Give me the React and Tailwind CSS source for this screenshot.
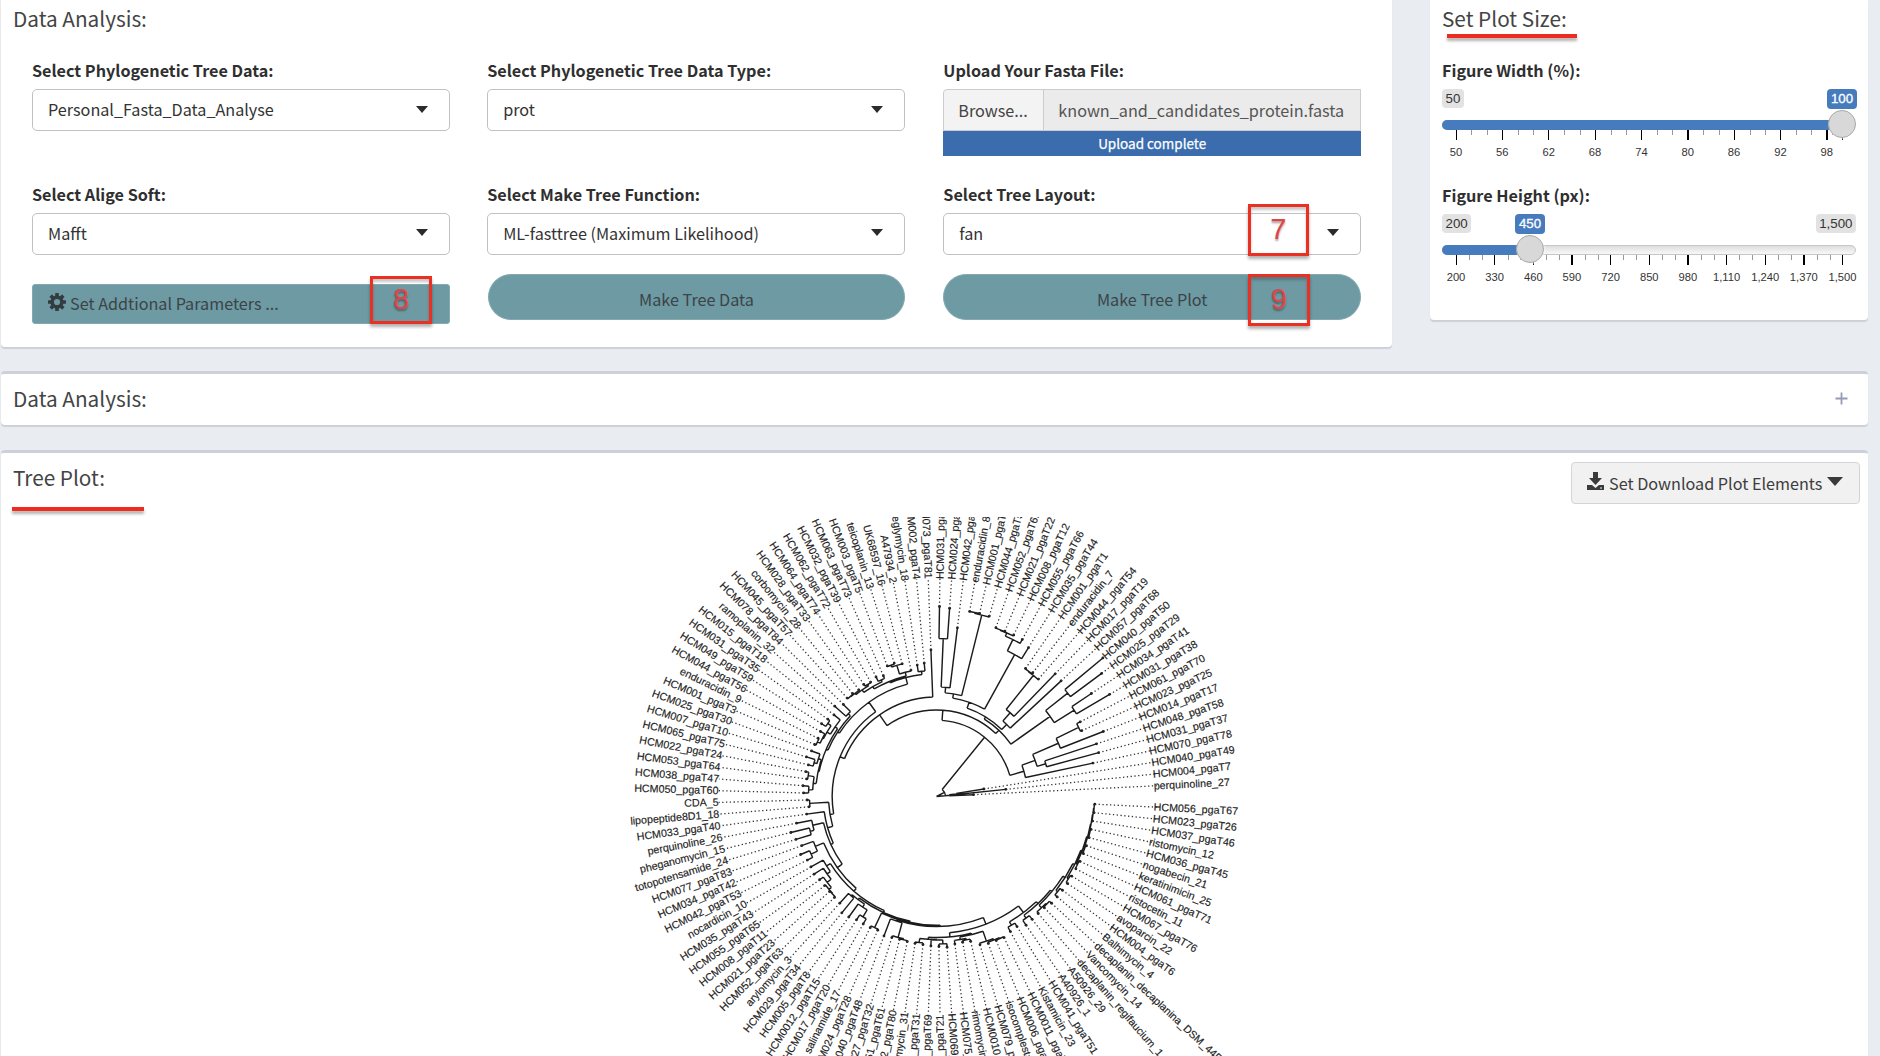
import React from "react";

/* ---------- phylogenetic tree ---------- */

const LABELS = [
  "perquinoline_27", "HCM004_pgaT7", "HCM040_pgaT49", "HCM070_pgaT78", "HCM031_pgaT37", "HCM048_pgaT58",
  "HCM014_pgaT17", "HCM023_pgaT25", "HCM061_pgaT70", "HCM031_pgaT38", "HCM034_pgaT41", "HCM025_pgaT29",
  "HCM040_pgaT50", "HCM057_pgaT68", "HCM017_pgaT19", "HCM044_pgaT54", "enduracidin_7", "HCM001_pgaT1",
  "HCM035_pgaT44", "HCM055_pgaT66", "HCM008_pgaT12", "HCM021_pgaT22", "HCM052_pgaT62", "HCM044_pgaT55",
  "HCM001_pgaT2", "enduracidin_8", "HCM042_pgaT52", "HCM024_pgaT27", "HCM031_pgaT36", "HCM073_pgaT81",
  "HCM002_pgaT4", "feglymycin_18", "A47934_2", "UK68597_16", "teicoplanin_13", "HCM003_pgaT5",
  "HCM063_pgaT73", "HCM032_pgaT39", "HCM062_pgaT72", "HCM064_pgaT74", "HCM028_pgaT33", "corbomycin_28",
  "HCM045_pgaT57", "HCM078_pgaT84", "ramoplanin_32", "HCM015_pgaT18", "HCM031_pgaT35", "HCM049_pgaT59",
  "HCM044_pgaT56", "enduracidin_9", "HCM001_pgaT3", "HCM025_pgaT30", "HCM007_pgaT10", "HCM065_pgaT75",
  "HCM022_pgaT24", "HCM053_pgaT64", "HCM038_pgaT47", "HCM050_pgaT60", "CDA_5", "lipopeptide8D1_18",
  "HCM033_pgaT40", "perquinoline_26", "pheganomycin_15", "totopotensamide_24", "HCM077_pgaT83",
  "HCM034_pgaT42", "HCM042_pgaT53", "nocardicin_10", "HCM035_pgaT43", "HCM055_pgaT65", "HCM008_pgaT11",
  "HCM021_pgaT23", "HCM052_pgaT63", "arylomycin_3", "HCM029_pgaT34", "HCM005_pgaT8", "HCM0012_pgaT15",
  "HCM017_pgaT20", "salinamide_17", "HCM024_pgaT28", "HCM040_pgaT48", "HCM027_pgaT32", "HCM051_pgaT61",
  "HCM072_pgaT80", "mannopeptimycin_31", "HCM026_pgaT31", "HCM058_pgaT69", "HCM020_pgaT21",
  "HCM069_pgaT77", "HCM075_pgaT82", "rimomycin_30", "HCM0010_pgaT13", "HCM079_pgaT85", "isocomplestatin_19",
  "HCM006_pgaT9", "HCM0011_pgaT14", "Kistamicin_23", "HCM041_pgaT51", "A40926_1", "A50926_29",
  "decaplanin_regifaucium_1", "Vancomycin_14", "decaplanin_decaplanina_DSM_44594", "Balhimycin_4",
  "HCM004_pgaT6", "avoparcin_22", "HCM067_pgaT76", "ristocetin_11", "HCM061_pgaT71", "keratinimicin_25",
  "nogabecin_21", "HCM036_pgaT45", "ristomycin_12", "HCM037_pgaT46", "HCM023_pgaT26", "HCM056_pgaT67",
];

const TIP_RADII = [
  37, 69.7, 48, 160, 168, 168.4, 179, 159.5, 162, 201, 186, 206, 216.5, 170, 170.7, 155.5, 156.8, 156, 175, 179,
  179, 179, 179, 188, 188, 188, 170, 188.7, 190, 146.8, 134, 132.8, 129, 137, 140, 139.6, 132, 134, 132, 133.6,
  132, 133, 133, 131, 136, 131, 133.5, 136, 133, 132, 132.5, 133, 136, 132, 133, 131, 134, 133, 129.5, 128,
  131, 142.5, 150, 147, 143.5, 147.7, 144, 144, 145, 143.5, 143, 143, 143.5, 144, 150, 149, 147, 147, 147, 146,
  149, 148, 147.5, 148, 148.4, 148.7, 149.5, 150, 151, 148.7, 148, 148.8, 154.6, 155.8, 156, 156.5, 154, 153,
  156.8, 155.7, 155, 155, 157, 157, 157, 157.5, 157, 157, 157.6, 157.6, 157.8, 158, 158, 158, 158.3, 158.5,
];

/* A node is [radius, ...children]; a number is a 1-based tip. */
const TREE = [9, [13, 1, [20, 2, 3]],
  [76.3,
    [91, 4, [105, [114, 5, 6], [133, 7, [158, 8, 9]]]],
    [86.5,
      [91,
        [139, [162.5, 10, 11], [167, 12, 13]],
        [93.5,
          [100.5, 14, [111.5, 15, [155, 16, [155.5, 17, 18]]]],
          [99.7,
            [162, 19, [174.5, 20, [178, 21, [178.5, 22, 23]]]],
            [104, [187, 24, [188, 25, 26]], [109.5, 27, [158, 28, 29]]]]]],
      [99.5, 30,
        [104.3,
          [116,
            [122.8, [126, 31, 32], [124.3,
              [128, 33, [137, 34, [139, 35, 36]]],
              [127, [129, 37, 38], [130, [131.5, 39, 40], [131.5, 41, [132, 42, 43]]]]]],
            [118,
              [121, 44, 45],
              [120,
                [123, 46, [127, [131, 47, 48], [128, 49, [131, 50, 51]]]],
                [121, [124, 52, [127, 53, 54]], [124, [130, 55, 56], [128, 57, 58]]]]]],
          [108,
            [127, 59, 60],
            [113.3, 61,
              [116,
                [127, 62, [131, 63, 64]],
                [122,
                  [131, 65, [138, 66, 67]],
                  [125.5,
                    [130, 68, [134, 69, [139, 70, [142, 71, [142.5, 72, 73]]]]],
                    [127.5,
                      [129.5, [131, 74, 75], [133, 76, [141, 77, 78]]],
                      [128.8,
                        [145, 79, 80],
                        [129.8,
                          [130.8, 81, [146, 82, [147, 83, 84]]],
                          [136.8,
                            [141, [143, [147, 85, 86], [143.5, 87, [147.5, 88, 89]]],
                              [142.5, [145, 90, [146.5, 91, 92]], [153, 93, [154.5, 94, [155.5, 95, 96]]]]],
                            [145,
                              [149, 97, 98],
                              [147.5,
                                [151, 99, 100],
                                [149.5,
                                  [153, 101, [154, 102, 103]],
                                  [152, [154, 104, 105], [154, [155.5, 106, 107], [155.5, [156.5, 108, 109],
                                    [156.5, [157, 110, 111], [157, [157.5, 112, 113], [157.5, 114, [158, 115, 116]]]]]]]],
                              ]]]]]]]]]]]]]]]];

const CX = 935.5;
const CY = 279.5;
const angleOf = (tip) => 2.8 + (tip - 1) * 3.082;
const polar = (r, deg) => {
  const t = (deg * Math.PI) / 180;
  return [CX + r * Math.cos(t), CY - r * Math.sin(t)];
};
const fmt = ([x, y]) => `${x.toFixed(2)} ${y.toFixed(2)}`;

function tracePaths(node, out) {
  if (typeof node === "number") return { r: TIP_RADII[node - 1], a: angleOf(node) };
  const [r, ...children] = node;
  const placed = children.map((c) => tracePaths(c, out));
  const angles = placed.map((p) => p.a);
  const lo = Math.min(...angles);
  const hi = Math.max(...angles);
  out.push(`M${fmt(polar(r, lo))}A${r} ${r} 0 ${hi - lo > 180 ? 1 : 0} 0 ${fmt(polar(r, hi))}`);
  placed.forEach((p) => out.push(`M${fmt(polar(r, p.a))}L${fmt(polar(p.r, p.a))}`));
  return { r, a: (lo + hi) / 2 };
}

function FanTree() {
  const segments = [];
  const root = tracePaths(TREE, segments);
  segments.push(`M${CX} ${CY}L${fmt(polar(root.r, root.a))}`, `M${CX} ${CY}L${fmt(polar(14, 5))}`);
  return (
    <svg className="block h-[539px] w-full overflow-hidden" viewBox="0 0 1867 539" preserveAspectRatio="xMinYMin slice">
      <path d={segments.join("")} fill="none" stroke="#1c1c1c" strokeWidth="1.45" strokeLinejoin="round" />
      {LABELS.map((label, i) => {
        const a = angleOf(i + 1);
        const flipped = a > 90 && a < 271;
        const [x1, y1] = polar(TIP_RADII[i], a);
        const [x2, y2] = polar(flipped ? 218 : 220.5, a);
        const [tx, ty] = polar(flipped ? 218 : 217.5, a);
        return (
          <g key={i}>
            <circle cx={x1} cy={y1} r="1.4" fill="#1c1c1c" />
            <line x1={x1} y1={y1} x2={x2} y2={y2} stroke="#333" strokeWidth="1.3" strokeDasharray="1.3 2.5" />
            <text
              x={tx}
              y={ty}
              dy={flipped ? 3.4 : 3.6}
              fontSize="10.7"
              fill="#222"
              stroke="#222"
              strokeWidth="0.15"
              textAnchor={flipped ? "end" : "start"}
              transform={`rotate(${flipped ? 180 - a : -a} ${tx} ${ty})`}
              className="font-['Liberation_Sans',sans-serif]"
            >
              {label}
            </text>
          </g>
        );
      })}
    </svg>
  );
}

/* ---------- form controls ---------- */

function Label({ children }) {
  return <div className="h-[32px] text-[16.2px] leading-[26px] font-bold text-[#2f2f2f]">{children}</div>;
}

function Select({ label, value, children }) {
  return (
    <div>
      <Label>{label}</Label>
      <div className="relative flex h-[42px] items-center justify-between rounded-[5px] border border-[#bfc1c4] bg-white pr-[21px] pl-[15px] text-[16.2px] text-[#333]">
        <span className="pb-px">{value}</span>
        <svg width="12" height="7" viewBox="0 0 12 7" className="mb-[2px]">
          <path d="M0 0H12L6 7Z" fill="#2b2b2b" />
        </svg>
        {children}
      </div>
    </div>
  );
}

function Marker({ digit, className }) {
  return (
    <div
      className={`absolute z-10 flex items-center justify-center border-[3px] border-[#ea2f23] font-['Liberation_Sans',sans-serif] text-[29px] leading-none text-[#e04545] shadow-[0_3px_3px_rgba(0,0,0,0.3),inset_0_3px_3px_rgba(0,0,0,0.22)] [text-shadow:0_2px_2px_rgba(0,0,0,0.35)] ${className}`}
    >
      {digit}
    </div>
  );
}

function Slider({ label, min, max, value, position, majors, minors, hideMax }) {
  return (
    <div className="h-[125px] font-['Liberation_Sans',sans-serif]">
      <div className="font-['Noto_Sans_CJK_SC',sans-serif]"><Label>{label}</Label></div>
      <div className="relative flex h-[31px] items-start justify-between text-[13.3px] leading-[19px] text-[#333]">
        <span className="rounded-[4px] bg-[#e2e2e2] px-[3.5px]">{min}</span>
        {!hideMax && <span className="rounded-[4px] bg-[#e2e2e2] px-[3.5px]">{max}</span>}
        <span
          className="absolute top-0 w-[30px] -translate-x-1/2 rounded-[4px] bg-[#467cbd] text-center leading-[20px] text-white [-webkit-text-stroke:0.3px_white]"
          style={{ left: position }}
        >
          {value}
        </span>
      </div>
      <div className="relative h-[10px] rounded-full border border-[#c6c6c6] bg-gradient-to-b from-[#dedede] to-[#f8f8f8]">
        <div className="absolute -top-px -left-px h-[10px] rounded-l-full bg-[#467cbd]" style={{ width: position }} />
        <div
          className="absolute -top-[11px] z-10 size-[28px] -translate-x-1/2 rounded-full border border-[#aaa] bg-[#d8d8d8] shadow-[1px_1px_2px_rgba(255,255,255,0.6)]"
          style={{ left: position - 1 }}
        />
      </div>
      <div className="relative h-[32px] text-[11.2px] text-[#333]">
        {minors.map((x) => (
          <i key={x} className="absolute top-0 h-[5px] w-px bg-[#999]" style={{ left: x }} />
        ))}
        {majors.map(([x, text]) => (
          <React.Fragment key={x}>
            <i className="absolute top-0 h-[10px] w-[1.3px] bg-black" style={{ left: x - 0.5 }} />
            <span className="absolute top-[15px] -translate-x-1/2 leading-[14px]" style={{ left: x }}>{text}</span>
          </React.Fragment>
        ))}
      </div>
    </div>
  );
}

const WIDTH_STEP = 46.35;
const widthMajors = [50, 56, 62, 68, 74, 80, 86, 92, 98].map((v, i) => [14 + i * WIDTH_STEP, v]);
const widthMinors = Array.from({ length: 8 }, (_, i) => [
  14 + (i + 1 / 3) * WIDTH_STEP,
  14 + (i + 2 / 3) * WIDTH_STEP,
]).flat().concat(390);
const HEIGHT_STEP = 38.65;
const heightMajors = ["200", "330", "460", "590", "720", "850", "980", "1,110", "1,240", "1,370", "1,500"].map((v, i) => [14 + i * HEIGHT_STEP, v]);
const heightMinors = Array.from({ length: 10 }, (_, i) => [
  14 + (i + 1 / 3) * HEIGHT_STEP,
  14 + (i + 2 / 3) * HEIGHT_STEP,
]).flat();

const CARD = "bg-white shadow-[0_2px_1px_rgba(0,0,0,0.12)]";
const TITLE = "text-[20.75px] leading-[30px] text-[#444]";
const PILL = "relative -mt-px h-[46px] rounded-full border border-[#84a9b0] bg-[#6d9aa3] text-center text-[16.2px] leading-[48px] text-[#3c4447]";

export default function App() {
  return (
    <div className="flex h-[1056px] w-[1880px] flex-col overflow-hidden bg-[#e9ecf1] pl-px font-['Noto_Sans_CJK_SC',sans-serif]">
      <div className="flex h-[371px] items-start">
        <section className={`h-[347px] w-[1391px] rounded-b-[4px] ${CARD}`}>
          <h3 className={`h-[57px] pt-[3px] pl-[12px] ${TITLE}`}>Data Analysis:</h3>
          <div className="ml-[31px] grid w-[1329px] grid-cols-3 gap-x-[38px]">
            <div className="h-[123.5px]"><Select label="Select Phylogenetic Tree Data:" value="Personal_Fasta_Data_Analyse" /></div>
            <div className="-ml-[0.5px]"><Select label="Select Phylogenetic Tree Data Type:" value="prot" /></div>
            <div>
              <Label>Upload Your Fasta File:</Label>
              <div className="flex h-[42px] rounded-tl-[4px] border border-[#cbccce] bg-[#ebebeb] text-[16.2px] leading-[41px]">
                <span className="w-[100px] rounded-tl-[4px] border-r border-[#cbccce] bg-[#f3f3f3] pl-[14px] text-[#444]">Browse...</span>
                <span className="pl-[14px] text-[#555]">known_and_candidates_protein.fasta</span>
              </div>
              <div className="h-[25px] bg-[#3a6cae] text-center text-[13.5px] leading-[24px] text-white [-webkit-text-stroke:0.25px_white]">Upload complete</div>
            </div>
            <div className="h-[94px]"><Select label="Select Alige Soft:" value="Mafft" /></div>
            <div className="-ml-[0.5px]"><Select label="Select Make Tree Function:" value="ML-fasttree (Maximum Likelihood)" /></div>
            <div>
              <Select label="Select Tree Layout:" value="fan">
                <Marker digit="7" className="top-[-10px] left-[303.5px] h-[52px] w-[61px]" />
              </Select>
            </div>
            <div className="relative mt-[9px] flex h-[40px] items-center rounded-[3px] border border-[#84a9b0] bg-[#6d9aa3] pl-[15px] text-[16.2px] text-[#3c4447]">
              <svg width="18" height="18" viewBox="0 0 18 18" className="mr-[4px] mb-[3px]">
                <g fill="#333c40">
                  {[0, 45, 90, 135].map((d) => (
                    <rect key={d} x="7.2" y="0" width="3.6" height="18" rx="0.6" transform={`rotate(${d} 9 9)`} />
                  ))}
                  <circle cx="9" cy="9" r="6.6" />
                </g>
                <circle cx="9" cy="9" r="3.1" fill="#6d9aa3" />
              </svg>
              Set Addtional Parameters ...
              <Marker digit="8" className="top-[-9px] left-[337px] h-[48px] w-[62px]" />
            </div>
            <div className={PILL}>Make Tree Data</div>
            <div className={PILL}>
              Make Tree Plot
              <Marker digit="9" className="top-[-1px] left-[303.5px] h-[52px] w-[62px]" />
            </div>
          </div>
        </section>

        <section className={`relative ml-[38px] h-[320px] w-[438px] rounded-b-[4px] px-[12px] ${CARD}`}>
          <h3 className={`h-[57px] pt-[3px] ${TITLE}`}>Set Plot Size:</h3>
          <div className="absolute top-[34px] left-[17px] h-[4px] w-[130px] bg-[#ef2b1f] shadow-[0_3px_3px_rgba(0,0,0,0.3)]" />
          <Slider label="Figure Width (%):" min="50" hideMax value="100" position={400} majors={[...widthMajors, [400.5, ""]]} minors={widthMinors} />
          <Slider label="Figure Height (px):" min="200" max="1,500" value="450" position={88} majors={heightMajors} minors={heightMinors} />
        </section>
      </div>

      <section className={`flex h-[54px] w-[1867px] shrink-0 justify-between rounded-[4px] border-t-[3px] border-[#cdd0da] pr-[20px] pl-[12px] ${CARD}`}>
        <h3 className={`pt-[9px] ${TITLE}`}>Data Analysis:</h3>
        <svg width="13" height="13" viewBox="0 0 13 13" className="mt-[18px]">
          <path d="M6.5 .5V12.5M.5 6.5H12.5" stroke="#959caf" strokeWidth="1.8" />
        </svg>
      </section>

      <section className={`relative mt-[25px] h-[606px] w-[1867px] shrink-0 rounded-t-[4px] border-t-[3px] border-[#cdd0da] ${CARD}`}>
        <div className="flex h-[64px] justify-between pr-[8px] pl-[12px]">
          <h3 className={`pt-[9px] ${TITLE}`}>Tree Plot:</h3>
          <button className="mt-[9px] flex h-[42px] w-[289px] items-center rounded-[4px] border border-[#d3d4d6] bg-[#f1f1f1] pl-[15px] text-[16.2px] text-[#3d3d3d]">
            <svg width="17" height="18" viewBox="0 0 17 18" className="mr-[5px] mb-[4px]">
              <path d="M6 0H11V6H15L8.5 13L2 6H6ZM0 13H5L8.5 16L12 13H17V18H0Z" fill="#3a3a3a" />
              <path d="M13 16H15" stroke="#f1f1f1" />
            </svg>
            Set Download Plot Elements
            <svg width="16" height="9" viewBox="0 0 16 9" className="mb-[4px] ml-[5px]">
              <path d="M0 0H16L8 9Z" fill="#3a3a3a" />
            </svg>
          </button>
        </div>
        <div className="absolute top-[54px] left-[11px] h-[4px] w-[132px] bg-[#ef2b1f] shadow-[0_3px_3px_rgba(0,0,0,0.3)]" />
        <FanTree />
      </section>
    </div>
  );
}
